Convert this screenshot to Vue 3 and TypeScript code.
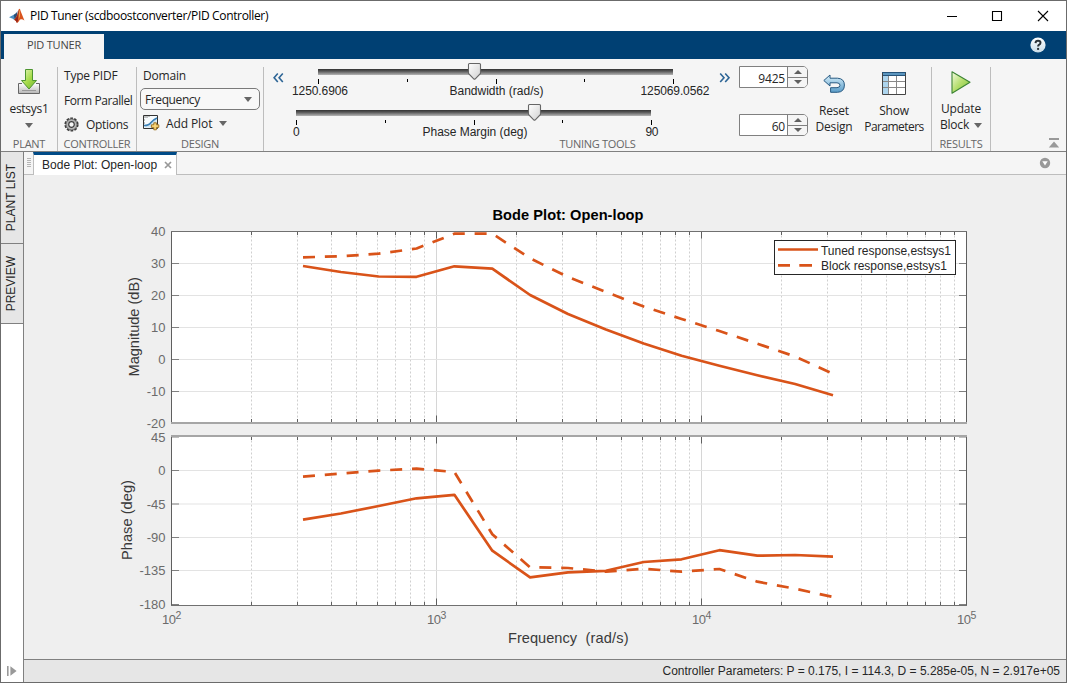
<script setup lang="ts">
type Point = [number, number]

const x0 = 171.5
const decade = 265

const freqX = (i: number) => 303 + i * 37.857
const toPoints = (ys: number[]) => ys.map((y, i) => `${freqX(i).toFixed(1)},${y}`).join(' ')

const magTuned = toPoints([266, 272, 276.5, 276.8, 266.3, 268.7, 295, 314, 329.5, 343.5, 355.7, 365.7, 375.3, 384, 395.3])
const magBlock = toPoints([257.3, 256.3, 253.7, 248.5, 233.7, 233.7, 258.3, 277, 292, 306.5, 319, 331, 343.7, 356.5, 373.7])
const phTuned = toPoints([519.7, 513.5, 506, 498.3, 494.8, 550.7, 577.4, 572.3, 570.8, 562, 559.3, 550.2, 555.7, 555, 556.7])
const phBlock = toPoints([476.7, 473.5, 470.6, 468.7, 472, 534.3, 567.3, 568, 571.7, 568.7, 571.7, 569, 581.7, 588.7, 597])

const snap = (v: number) => Math.floor(v) + 0.5
const minorX: number[] = []
for (let d = 0; d < 3; d++) {
  for (let k = 2; k < 10; k++) minorX.push(snap(x0 + decade * (d + Math.log10(k))))
}
const majorX = [436.5, 701.5]

interface Tick { y: number; label: string }
interface Axes { top: number; bottom: number; ticks: Tick[]; tuned: string; block: string }
const axes: Axes[] = [
  {
    top: 231.5, bottom: 422.5,
    ticks: [[231.5, 40], [263.5, 30], [295.5, 20], [327.5, 10], [359.5, 0], [391.5, -10], [423, -20]].map(([y, l]) => ({ y, label: String(l) })),
    tuned: magTuned, block: magBlock,
  },
  {
    top: 436.5, bottom: 605.5,
    ticks: [[437, 45], [470.5, 0], [504, -45], [537.5, -90], [570.5, -135], [604.5, -180]].map(([y, l]) => ({ y, label: String(l) })),
    tuned: phTuned, block: phBlock,
  },
]
const decades: { x: number; e: number }[] = [2, 3, 4, 5].map((e, i) => ({ x: x0 + decade * i, e }))

interface Slider { x: number; y: number; ticks: number[]; thumb: number; min: Point; minText: string; minW: number; max: Point; maxText: string; maxW: number; label: string; labelX: number; labelW: number; textY: number }
const sliders: Slider[] = [
  { x: 318, y: 69, ticks: [318.5, 407.5, 496.5, 584.5, 673.5], thumb: 474.5, min: [292, 0], minText: '1250.6906', minW: 56, max: [640.5, 0], maxText: '125069.0562', maxW: 69, label: 'Bandwidth (rad/s)', labelX: 449.5, labelW: 94, textY: 95 },
  { x: 296, y: 110, ticks: [296.5, 385.5, 474.5, 562.5, 651.5], thumb: 534.5, min: [293, 0], minText: '0', minW: 7, max: [645.5, 0], maxText: '90', maxW: 13, label: 'Phase Margin (deg)', labelX: 422.5, labelW: 105, textY: 136 },
]
</script>

<template>
  <div class="window">
    <header class="titlebar">
      <svg class="logo" width="16" height="16" viewBox="0 0 16 16">
        <path d="M0 9.2 4.8 6.8 8 8.6 5 11.8 3.8 10.8z" fill="#4a8fc2" />
        <path d="M4.8 6.8Q7 6 8.6 3L7.8 8.8 5.6 10.8z" fill="#2a4f78" />
        <path d="M5 11.8Q8 9 10 1Q11 .2 11.6 3L15.4 12.4Q12.6 10.4 11 11.6Q9.4 14.6 8 15Q6.8 12.2 5 11.8z" fill="#d9541e" />
        <path d="M10 1Q8.8 4 8.2 8.4L5.2 11.8Q7 12.4 8 15Q9 13 9.4 10z" fill="#96251a" />
        <path d="M10 1.6Q11.3 4 10.9 8L9.6 12Q9.8 6 10 1.6z" fill="#f7b14e" />
      </svg>
      <span class="title">PID Tuner (scdboostconverter/PID Controller)</span>
      <svg class="controls" width="110" height="20" viewBox="0 0 110 20">
        <path d="M1 10.5H11M46.5 5.5H55.5V14.5H46.5z" fill="none" stroke="#000" stroke-width="1.1" />
        <path d="M92 5 102 15M102 5 92 15" fill="none" stroke="#000" stroke-width="1.1" />
      </svg>
    </header>

    <nav class="tabs">
      <div class="tab">PID TUNER</div>
      <svg class="help" width="16" height="16" viewBox="0 0 16 16">
        <defs><linearGradient id="help" x1="0" y1="0" x2="0" y2="1"><stop offset="0" stop-color="#fff" /><stop offset="1" stop-color="#c8dce8" /></linearGradient></defs>
        <circle cx="8" cy="8" r="7.6" fill="url(#help)" />
        <path d="M5.5 6.1Q5.6 3.7 8 3.7 10.5 3.7 10.5 5.8 10.5 7.1 8.9 7.9 8.1 8.4 8.1 9.6" fill="none" stroke="#2b3338" stroke-width="2" />
        <rect x="7.1" y="10.9" width="2" height="2" fill="#2b3338" />
      </svg>
    </nav>

    <div class="toolstrip">
      <section class="group plant">
        <div class="body stack">
          <svg width="24" height="26" viewBox="0 0 24 26">
            <defs>
              <linearGradient id="arrow" x1="0" y1="0" x2="1" y2="1"><stop offset="0" stop-color="#eaf7c8" /><stop offset=".5" stop-color="#a8dc4c" /><stop offset="1" stop-color="#6fb62c" /></linearGradient>
              <linearGradient id="tray" x1="0" y1="0" x2="0" y2="1"><stop offset="0" stop-color="#fff" /><stop offset="1" stop-color="#b5b5b5" /></linearGradient>
            </defs>
            <path d="M5 14.5H1.5V24.5H22.5V14.5H19" fill="url(#tray)" stroke="#666" />
            <path d="M5 21.5H19" stroke="#999" />
            <path d="M8.5 .5H15.5V11.5H19.5L12 20 4.5 11.5H8.5z" fill="url(#arrow)" stroke="#4d9530" />
          </svg>
          <span class="plant-name">estsys1</span>
          <i class="caret"></i>
        </div>
        <div class="caption c-plant">PLANT</div>
      </section>

      <section class="group controller">
        <div class="body rows">
          <span class="t1">Type PIDF</span>
          <span class="t2">Form Parallel</span>
          <span class="with-icon">
            <svg width="15" height="15" viewBox="0 0 15 15">
              <circle cx="7.5" cy="7.5" r="6.2" fill="none" stroke="#3a3a3a" stroke-width="1.8" stroke-dasharray="2.6 1.3" />
              <circle cx="7.5" cy="7.5" r="4.6" fill="none" stroke="#b4b4b4" stroke-width="2.2" />
              <circle cx="7.5" cy="7.5" r="5.6" fill="none" stroke="#444" stroke-width=".8" />
              <circle cx="7.5" cy="7.5" r="2.8" fill="#f5f5f5" stroke="#3a3a3a" stroke-width="1.2" />
            </svg>
            <span class="t3">Options</span>
          </span>
        </div>
        <div class="caption c-controller">CONTROLLER</div>
      </section>

      <section class="group design">
        <div class="body rows">
          <span class="t4">Domain</span>
          <span class="combo"><span class="t5">Frequency</span><i class="caret"></i></span>
          <span class="with-icon addplot">
            <svg width="17" height="16" viewBox="0 0 17 16">
              <path d="M.5 .5H14.5V13.5H.5z" fill="#f7fbfd" stroke="#333" />
              <path d="M2 1V3M4 1V3M6 1V2M1 5H2M1 8H2" stroke="#888" />
              <path d="M1.5 12.5 1.5 10Q6 10 8 7L13.5 2.5V12.5z" fill="#cfe5f3" />
              <path d="M1 10.5Q6 10.5 8 7.5 10 4.8 14 3" fill="none" stroke="#3a7fb5" stroke-width="1.6" />
              <path d="M10.8 7.8H13.4V9.8H15.8V12.4H13.4V14.8H10.8V12.4H8.4V9.8H10.8z" fill="#f8d67a" stroke="#9b6c18" stroke-width=".9" />
            </svg>
            <span class="t6">Add Plot</span><i class="caret"></i>
          </span>
        </div>
        <div class="caption c-design">DESIGN</div>
      </section>

      <section class="group tuning">
        <div class="body tuning-row">
          <svg class="sliders" width="471" height="82" viewBox="264 59 471 82">
            <defs>
              <linearGradient id="track" x1="0" y1="0" x2="0" y2="1"><stop offset="0" stop-color="#333" /><stop offset=".35" stop-color="#555" /><stop offset="1" stop-color="#b5b5b5" /></linearGradient>
              <linearGradient id="thumb" x1="0" y1="0" x2="1" y2="1"><stop offset="0" stop-color="#fff" /><stop offset="1" stop-color="#d0d0d0" /></linearGradient>
            </defs>
            <path d="M277.5 73.5 273.8 77.7 277.5 82M282.5 73.5 278.8 77.7 282.5 82" transform="translate(.3 0)" class="chev" />
            <path d="M720.2 73.5 724 77.7 720.2 82M725.2 73.5 729 77.7 725.2 82" class="chev" />
            <g v-for="s in sliders" :key="s.label">
              <rect :x="s.x" :y="s.y" width="355" height="6" fill="url(#track)" />
              <line v-for="(t, i) in s.ticks" :key="t" :x1="t" :x2="t" :y1="s.y + 10" :y2="s.y + (i % 2 ? 13 : 15)" stroke="#000" />
              <path :transform="`translate(${s.thumb} ${s.y})`" d="M-6 -4.5Q-6 -5.5 -5 -5.5H5Q6 -5.5 6 -4.5V4.5L.8 9.8Q0 10.5 -.8 9.8L-6 4.5z" fill="url(#thumb)" stroke="#666" stroke-width="1.1" />
              <text :x="s.min[0]" :y="s.textY" :textLength="s.minW">{{ s.minText }}</text>
              <text :x="s.max[0]" :y="s.textY" :textLength="s.maxW">{{ s.maxText }}</text>
              <text :x="s.labelX" :y="s.textY" :textLength="s.labelW">{{ s.label }}</text>
            </g>
          </svg>
          <div class="spinners">
            <div v-for="v in ['9425', '60']" :key="v" class="spinner">
              <span class="value">{{ v }}</span>
              <span class="arrows"><span><i class="up"></i></span><span><i class="down"></i></span></span>
            </div>
          </div>
          <div class="big reset">
            <svg width="22" height="20" viewBox="0 0 22 20">
              <defs><linearGradient id="undo" x1="0" y1="0" x2="0" y2="1"><stop offset="0" stop-color="#d8f0fb" /><stop offset="1" stop-color="#5a9cc8" /></linearGradient></defs>
              <path d="M.8 6.5 7 1V4.2H14.5Q21.4 4.6 21.4 11 21.4 18 14.5 18.3H7.6V13.7H14Q17 13.5 17 11.2 17 9 14 8.8H7V12z" fill="url(#undo)" stroke="#285a82" stroke-width="1" />
            </svg>
            <span class="t7">Reset</span><span class="t8">Design</span>
          </div>
          <div class="big params">
            <svg width="24" height="23" viewBox="0 0 24 23">
              <path d="M.5 .5H23.5V22.5H.5z" fill="#fff" />
              <path d="M1 4H7V22H1z" fill="#add5ee" />
              <path d="M1 1H23V4H1z" fill="#5b95be" />
              <path d="M6.5 4V22M14.5 4V22M1 9.5H23M1 15.5H23" stroke="#888" />
              <path d="M.5 .5H23.5V22.5H.5z" fill="none" stroke="#444" />
              <path d="M0 .5H24M1 3.5H23" stroke="#26547a" />
            </svg>
            <span class="t9">Show</span><span class="t10">Parameters</span>
          </div>
        </div>
        <div class="caption c-tuning">TUNING TOOLS</div>
      </section>

      <section class="group results">
        <div class="body stack update">
          <svg width="20" height="23" viewBox="0 0 20 23">
            <defs><linearGradient id="play" x1="0" y1="0" x2="1" y2="1"><stop offset="0" stop-color="#f4fbe2" /><stop offset=".5" stop-color="#b4de6c" /><stop offset="1" stop-color="#7cc038" /></linearGradient></defs>
            <path d="M1 .8 19 11.3 1 22.2z" fill="url(#play)" stroke="#3c8434" stroke-width="1.1" stroke-linejoin="round" />
          </svg>
          <span class="t11">Update</span>
          <span class="line"><span class="t12">Block</span><i class="caret"></i></span>
        </div>
        <div class="caption c-results">RESULTS</div>
      </section>

      <svg class="collapse" width="12" height="10" viewBox="0 0 12 10"><path d="M1 0H11V2H1zM6 3.5 11.2 9.5H.8z" fill="#999" /></svg>
    </div>

    <main class="main">
      <aside class="side">
        <div class="side-tab first"><span class="s1">PLANT LIST</span></div>
        <div class="side-tab second"><span class="s2">PREVIEW</span></div>
        <svg class="expand" width="12" height="12" viewBox="0 0 12 12"><path d="M1 1H2.6V11H1zM4.4 1.2 10.6 6 4.4 10.8z" fill="#999" /></svg>
      </aside>
      <div class="doc">
        <div class="doc-tabs">
          <svg class="grip" width="9" height="22" viewBox="0 0 9 22"><path d="M3 6.5H7M3 8.5H7M3 10.5H7M3 12.5H7M3 14.5H7" stroke="#b5b5b5" /></svg>
          <div class="doc-tab"><span class="d1">Bode Plot: Open-loop</span>
            <svg width="8" height="8" viewBox="0 0 8 8"><path d="M1 1 7 7M7 1 1 7" stroke="#999" stroke-width="1.7" /></svg>
          </div>
          <svg class="menu" width="12" height="12" viewBox="0 0 12 12"><circle cx="6" cy="6" r="5.2" fill="#999" /><path d="M3.3 4.2H8.7L6 8.6z" fill="#fff" /></svg>
        </div>

        <svg class="plot" width="1042" height="484" viewBox="24 175 1042 484">
          <text x="492.5" y="219.5" textLength="151" class="plot-title">Bode Plot: Open-loop</text>
          <g v-for="a in axes" :key="a.top">
            <rect :x="171.5" :y="a.top" width="795" :height="a.bottom - a.top" fill="#fff" />
            <line v-for="x in minorX" :key="x" :x1="x" :x2="x" :y1="a.top" :y2="a.bottom" stroke="#cfcfcf" stroke-dasharray="2 2" />
            <line v-for="x in majorX" :key="x" :x1="x" :x2="x" :y1="a.top" :y2="a.bottom" stroke="#d6d6d6" />
            <line v-for="t in a.ticks.slice(1, -1)" :key="t.y" x1="172" x2="966" :y1="t.y" :y2="t.y" stroke="#e3e3e3" />
            <g stroke="#5f5f5f">
              <path v-for="x in minorX" :key="x" :d="`M${x} ${a.top}v3.5M${x} ${a.bottom}v-3.5`" />
              <path v-for="x in majorX" :key="x" :d="`M${x} ${a.top}v7M${x} ${a.bottom}v-7`" />
              <path v-for="t in a.ticks" :key="t.y" :d="`M171.5 ${t.y}h7.5M966.5 ${t.y}h-7.5`" stroke="#808080" />
              <path :d="`M171.5 ${a.top}V${a.bottom}M966.5 ${a.top}V${a.bottom}`" />
            </g>
            <polyline :points="a.tuned" class="curve" />
            <polyline :points="a.block" class="curve dashed" />
            <text v-for="t in a.ticks" :key="t.label" x="165.5" :y="t.y + 4.6" text-anchor="end" class="tick">{{ t.label }}</text>
          </g>
          <path d="M171 231.5H967M171 605.5H967" stroke="#707070" />
          <path d="M171 423H967M171 436H967" stroke="#a6a6a6" stroke-width="2" />
          <g v-for="d in decades" :key="d.e">
            <text :x="d.x - 9.5" y="624" textLength="14" class="tick">10</text>
            <text :x="d.x + 4" y="618.5" class="tick exp">{{ d.e }}</text>
          </g>
          <text x="508" y="643" textLength="69" class="axis">Frequency</text>
          <text x="585.5" y="643" textLength="43" class="axis">(rad/s)</text>
          <text transform="translate(139 376.5) rotate(-90)" textLength="99.5" class="axis">Magnitude (dB)</text>
          <text transform="translate(132 560) rotate(-90)" textLength="80" class="axis">Phase (deg)</text>
          <rect x="774.5" y="240.5" width="181" height="34" fill="#fff" stroke="#262626" />
          <path d="M778 249.5H818" class="curve" />
          <path d="M778 265.3H818" class="curve" stroke-dasharray="12 9.3 12.7 20" />
          <text x="821" y="255" textLength="130" class="legend">Tuned response,estsys1</text>
          <text x="821" y="270" textLength="126" class="legend">Block response,estsys1</text>
        </svg>

        <footer class="status"><span>Controller Parameters: P = 0.175, I = 114.3, D = 5.285e-05, N = 2.917e+05</span></footer>
      </div>
    </main>
  </div>
</template>

<style>
body { margin: 0; background: #fff; }
</style>

<style scoped>
.window { box-sizing: border-box; width: 1067px; height: 683px; border: 1px solid #6b6b6b; display: flex; flex-direction: column; overflow: hidden; font-family: "Open Sans", "Noto Sans", sans-serif; font-size: 12px; color: #262626; background: #f5f5f5; }
span, div { white-space: nowrap; }
svg { display: block; flex: none; }
.titlebar { height: 30px; flex: none; background: #fff; display: flex; align-items: center; padding-left: 8px; color: #000; }
.title { margin-left: 5px; margin-top: -1px; letter-spacing: -.34px; }
.controls { margin-left: auto; margin-right: 10px; margin-top: -1px; }
.tabs { height: 28px; flex: none; background: #004073; display: flex; align-items: flex-end; padding-left: 3px; }
.tab { width: 100px; height: 25px; line-height: 21px; background: #f5f5f5; text-align: center; font-size: 11px; letter-spacing: -.2px; color: #444; }
.help { margin: 0 20px 6px auto; }
.toolstrip { height: 92px; flex: none; display: flex; border-bottom: 1px solid #808080; letter-spacing: -.2px; }
.group { box-sizing: border-box; height: 84px; margin-top: 8px; border-right: 1px solid #bdbdbd; display: flex; flex-direction: column; }
.body { height: 70px; flex: none; }
.caption { height: 14px; line-height: 13px; text-align: center; font-size: 11px; color: #666; letter-spacing: -.28px; }
.plant { width: 57px; } .controller { width: 79px; } .design { width: 127px; } .tuning { width: 668px; } .results { width: 59px; }
.stack { display: flex; flex-direction: column; align-items: center; padding-top: 2px; box-sizing: border-box; }
.plant-name { line-height: 16px; margin: 6px 0 6px; letter-spacing: -.3px; }
.caret { border: 4.5px solid transparent; border-top: 5px solid #666; border-bottom: 0; width: 0; height: 0; }
.rows { display: flex; flex-direction: column; }
.controller .rows { padding-left: 6px; }
.t1, .t4 { line-height: 18px; }
.t2 { line-height: 18px; margin-top: 7px; letter-spacing: -.42px; }
.with-icon { display: flex; align-items: center; height: 18px; margin-top: 6px; }
.t3 { margin-left: 7px; margin-top: -1px; letter-spacing: -.3px; }
.controller .with-icon svg { margin-top: -1px; }
.design .rows { padding-left: 3px; }
.t4 { margin-left: 3px; }
.t5 { letter-spacing: -.4px; }
.combo { box-sizing: border-box; width: 120px; height: 22px; margin-top: 3px; border: 1px solid #7a7a7a; border-radius: 5px; background: #f8f8f8; display: flex; align-items: center; justify-content: space-between; padding: 0 7px 0 4px; }
.addplot { margin-top: 4px; padding-left: 3px; }
.t6 { margin-left: 6px; letter-spacing: -.1px; }
.addplot .caret { margin-left: 7px; }
.tuning-row { display: flex; }
.sliders { margin-top: -8px; letter-spacing: 0; }
.sliders text { font: 12px "Liberation Sans", Arial, sans-serif; fill: #262626; }
.chev { fill: none; stroke: #2d6596; stroke-width: 1.6; }
.spinners { margin: -1px 0 0 4px; width: 69px; display: flex; flex-direction: column; gap: 26px; }
.spinner { box-sizing: border-box; width: 69px; height: 22px; flex: none; border: 1px solid #808080; border-radius: 0 5px 5px 0; background: #fff; display: flex; overflow: hidden; }
.value { width: 45px; text-align: right; line-height: 24px; padding-right: 1px; letter-spacing: -.2px; }
.arrows { flex: 1; margin-left: 1px; background: #f5f5f5; border-left: 1px solid #808080; display: flex; flex-direction: column; }
.arrows > span { flex: 1; display: flex; align-items: center; justify-content: center; }
.arrows > span + span { border-top: 1px solid #808080; }
.up, .down { border: 4px solid transparent; border-top: 0; border-bottom: 4px solid #606060; }
.down { border-bottom: 0; border-top: 4px solid #606060; }
.big { display: flex; flex-direction: column; align-items: center; line-height: 16px; }
.reset { width: 50px; padding-top: 7px; margin-left: 1px; }
.reset svg { margin-bottom: 9px; }
.params { width: 70px; padding-top: 5px; }
.params svg { margin-bottom: 8px; }
.t10 { letter-spacing: -.55px; }
.update { padding-top: 4px; line-height: 16px; }
.t11 { margin-top: 7px; }
.line { display: flex; align-items: center; gap: 5px; }
.collapse { margin: 79px 0 0 auto; padding-right: 6px; }
.main { flex: 1; display: flex; min-height: 0; }
.side { width: 22px; flex: none; border-right: 1px solid #808080; background: #fff; display: flex; flex-direction: column; font-family: "Liberation Sans", Arial, sans-serif; }
.side-tab { background: #e6e6e6; border-bottom: 1px solid #808080; display: flex; align-items: center; justify-content: center; padding-right: 2px; }
.side-tab span { writing-mode: vertical-rl; transform: rotate(180deg); line-height: 14px; }
.first { height: 91px; } .second { height: 79px; }
.expand { margin: auto auto 5px 5px; }
.doc { flex: 1; display: flex; flex-direction: column; min-width: 0; }
.doc-tabs { height: 22px; flex: none; border-bottom: 1px solid #bdbdbd; display: flex; }
.doc-tab { box-sizing: border-box; width: 144px; height: 23px; background: #fff; border-top: 3px solid #004b87; border-left: 1px solid #bdbdbd; border-right: 1px solid #bdbdbd; display: flex; align-items: center; padding-left: 8px; font-family: "Liberation Sans", Arial, sans-serif; }
.doc-tab svg { margin-left: 7px; }
.d1 { letter-spacing: .02px; }
.menu { margin: 5px 15px 0 auto; }
.plot { background: #efefef; font-family: "Liberation Sans", Arial, sans-serif; }
.plot-title { font-size: 14.6px; font-weight: bold; fill: #000; }
.tick { font-size: 13px; fill: #6b6b6b; }
.exp { font-size: 10.5px; }
.axis { font-size: 14.6px; fill: #3a3a3a; }
.legend { font-size: 12px; fill: #262626; }
.curve { fill: none; stroke: #d95319; stroke-width: 2.7; stroke-linejoin: round; }
.dashed { stroke-dasharray: 12 9.86; }
.status { height: 22px; flex: none; border-top: 1px solid #808080; background: #e6e6e6; text-align: right; line-height: 23px; padding-right: 6px; font-family: "Liberation Sans", Arial, sans-serif; }
</style>
